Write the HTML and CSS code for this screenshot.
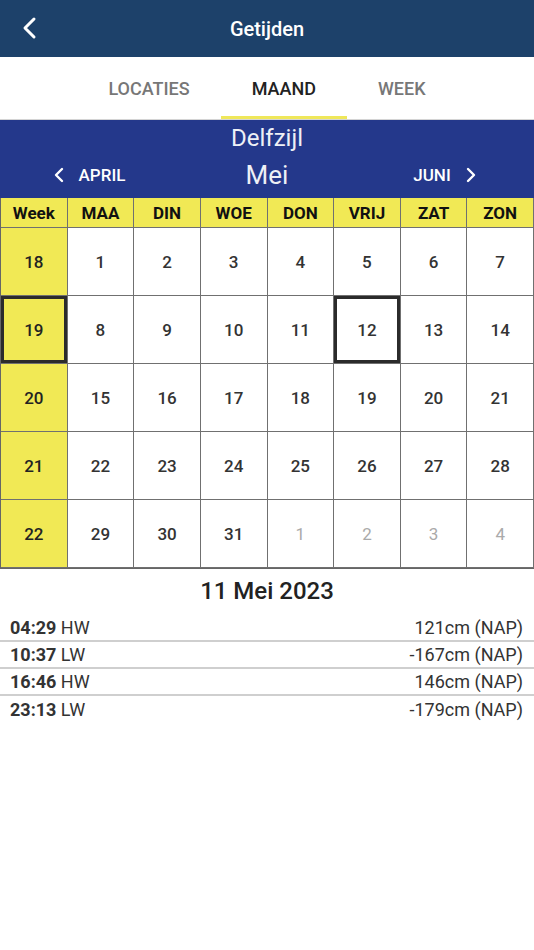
FILE: index.html
```html
<!DOCTYPE html>
<html lang="nl">
<head>
<meta charset="utf-8">
<title>Getijden</title>
<link rel="stylesheet" href="styles.css">
</head>
<body>
<header class="appbar">
  <button class="back" aria-label="Terug">
    <svg width="20" height="24" viewBox="0 0 20 24"><polyline points="14,3 5,12 14,21" fill="none" stroke="#fff" stroke-width="3" stroke-linecap="round" stroke-linejoin="round"/></svg>
  </button>
  <h1 class="title">Getijden</h1>
</header>
<nav class="tabs">
  <div class="tab">LOCATIES</div>
  <div class="tab active">MAAND</div>
  <div class="tab">WEEK</div>
</nav>
<section class="band">
  <div class="place">Delfzijl</div>
  <div class="monthnav">
    <div class="navbtn">
      <svg width="12" height="18" viewBox="0 0 12 18"><polyline points="9,3 3,9 9,15" fill="none" stroke="#fff" stroke-width="2.4" stroke-linecap="round" stroke-linejoin="round"/></svg>
      <span>APRIL</span>
    </div>
    <div class="month">Mei</div>
    <div class="navbtn">
      <span>JUNI</span>
      <svg width="12" height="18" viewBox="0 0 12 18"><polyline points="3,3 9,9 3,15" fill="none" stroke="#fff" stroke-width="2.4" stroke-linecap="round" stroke-linejoin="round"/></svg>
    </div>
  </div>
</section>
<div class="cal">
  <div class="hd">Week</div><div class="hd">MAA</div><div class="hd">DIN</div><div class="hd">WOE</div><div class="hd">DON</div><div class="hd">VRIJ</div><div class="hd">ZAT</div><div class="hd">ZON</div>

  <div class="wk">18</div><div class="d">1</div><div class="d">2</div><div class="d">3</div><div class="d">4</div><div class="d">5</div><div class="d">6</div><div class="d">7</div>
  <div class="wk sel">19</div><div class="d">8</div><div class="d">9</div><div class="d">10</div><div class="d">11</div><div class="d sel">12</div><div class="d">13</div><div class="d">14</div>
  <div class="wk">20</div><div class="d">15</div><div class="d">16</div><div class="d">17</div><div class="d">18</div><div class="d">19</div><div class="d">20</div><div class="d">21</div>
  <div class="wk">21</div><div class="d">22</div><div class="d">23</div><div class="d">24</div><div class="d">25</div><div class="d">26</div><div class="d">27</div><div class="d">28</div>
  <div class="wk">22</div><div class="d">29</div><div class="d">30</div><div class="d">31</div><div class="d other">1</div><div class="d other">2</div><div class="d other">3</div><div class="d other">4</div>
</div>
<h2 class="date">11 Mei 2023</h2>
<ul class="tides">
  <li><span><b>04:29</b> HW</span><span>121cm (NAP)</span></li>
  <li><span><b>10:37</b> LW</span><span>-167cm (NAP)</span></li>
  <li><span><b>16:46</b> HW</span><span>146cm (NAP)</span></li>
  <li><span><b>23:13</b> LW</span><span>-179cm (NAP)</span></li>
</ul>
</body>
</html>
```
FILE: styles.css
```css
* { box-sizing: border-box; }
html, body { margin: 0; padding: 0; background: #fff; }
body { font-family: Roboto, "Noto Sans", "Liberation Sans", sans-serif; color: #222; width: 534px; }

.appbar {
  height: 57px;
  background: #1d416a;
  display: flex;
  align-items: center;
  justify-content: center;
  position: relative;
}
.back {
  position: absolute;
  left: 20px;
  top: 16px;
  background: none;
  border: 0;
  padding: 0;
  width: 20px;
  height: 24px;
  display: block;
}
.back svg { display: block; }
.title { margin: 0; color: #fff; font-size: 20px; font-weight: 500; }

.tabs {
  height: 63px;
  display: flex;
  justify-content: center;
  border-bottom: 1px solid #d4d4d4;
}
.tab {
  padding: 0 31px;
  display: flex;
  align-items: center;
  font-size: 18px;
  font-weight: 500;
  color: #777;
  border-bottom: 3px solid transparent;
  padding-top: 3px;
}
.tab.active { color: #222; border-bottom-color: #efe75a; }

.band {
  background: #24388b;
  height: 78px;
  color: #fff;
}
.place {
  text-align: center;
  font-size: 24px;
  line-height: 34px;
  padding-top: 1px;
  color: #eef0f6;
}
.monthnav {
  display: grid;
  grid-template-columns: 1fr 1fr 1fr;
  align-items: center;
  height: 40px;
}
.navbtn {
  display: flex;
  justify-content: center;
  align-items: center;
  gap: 14px;
  font-size: 17px;
  font-weight: 500;
}
.navbtn svg { display: block; }
.month { text-align: center; font-size: 26px; color: #eef0f6; }

.cal {
  display: grid;
  grid-template-columns: repeat(8, 1fr);
  grid-template-rows: 30px repeat(5, 68px);
  border-bottom: 1px solid #666;
  border-left: 1px solid #666;
}
.cal > div {
  border-right: 1.5px solid #707070;
  border-bottom: 1.5px solid #707070;
  display: flex;
  align-items: center;
  justify-content: center;
  font-size: 17px;
  font-weight: 500;
  color: #333;
}
.cal > .hd {
  background: #f1e955;
  color: #111;
  font-weight: 700;
  font-size: 17px;
}
.cal > .wk { background: #f1e955; color: #222; }
.cal > .d { background: #fff; }
.cal > .other { color: #aaa; font-weight: 400; }
.cal > .sel { box-shadow: inset 0 0 0 3px #2b2b2b; }

.date {
  margin: 0;
  text-align: center;
  font-size: 24px;
  font-weight: 500;
  color: #222;
  padding-top: 8px;
  height: 46px;
}
.tides { list-style: none; margin: 0; padding: 0; }
.tides li {
  display: flex;
  justify-content: space-between;
  align-items: center;
  padding: 0 11px 0 10px;
  height: 27px;
  font-size: 18px;
  color: #333;
  border-bottom: 2px solid #cfcfcf;
}
.tides li:last-child { border-bottom: 0; }
.tides b { font-weight: 700; }
```
